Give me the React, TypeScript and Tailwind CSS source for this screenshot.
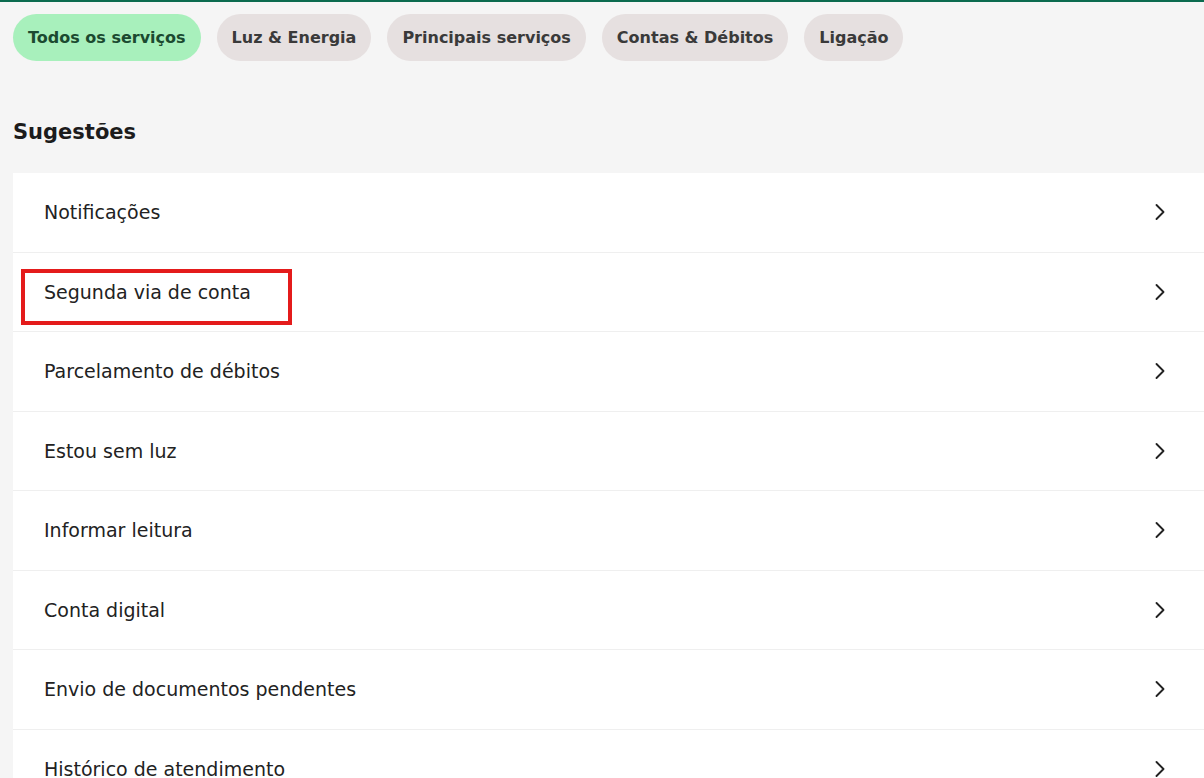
import { ChevronRight } from "lucide-react";

const chips = [
  { label: "Todos os serviços", active: true },
  { label: "Luz & Energia" },
  { label: "Principais serviços" },
  { label: "Contas & Débitos" },
  { label: "Ligação" },
];

const items = [
  "Notificações",
  "Segunda via de conta",
  "Parcelamento de débitos",
  "Estou sem luz",
  "Informar leitura",
  "Conta digital",
  "Envio de documentos pendentes",
  "Histórico de atendimento",
];

export default function App() {
  return (
    <div
      className="h-[778px] overflow-hidden bg-[#f5f5f5] border-t-2 border-[#0b6b4f]"
      style={{ fontFamily: '"DejaVu Sans", "Noto Sans", sans-serif' }}
    >
      {/* Filter chips */}
      <div className="flex gap-4 pl-[13px] pt-3">
        {chips.map((c) => (
          <button
            key={c.label}
            className={`h-[47px] px-[15px] rounded-full text-[16px] font-semibold ${
              c.active ? "bg-[#a8f0bc] text-[#1b4a30]" : "bg-[#e6e0e0] text-[#3a3a3a]"
            }`}
          >
            {c.label}
          </button>
        ))}
      </div>

      <h2 className="pl-[13px] mt-[56px] mb-[26px] text-[21px] font-bold text-[#1c1c1c] leading-[30px]">
        Sugestões
      </h2>

      {/* Suggestions list */}
      <ul className="ml-[13px] bg-white">
        {items.map((item, i) => (
          <li
            key={item}
            className="relative h-[79.5px] flex items-center justify-between pl-[31px] pr-[30px] border-b border-[#efefef]"
          >
            <span className="text-[19px] text-[#222]">{item}</span>
            <ChevronRight className="w-[28px] h-[28px] text-[#222]" strokeWidth={1.6} />
            {i === 1 && (
              <div className="absolute left-[8px] top-[16px] w-[271px] h-[56px] border-[4px] border-[#e41b1b]" />
            )}
          </li>
        ))}
      </ul>
    </div>
  );
}
